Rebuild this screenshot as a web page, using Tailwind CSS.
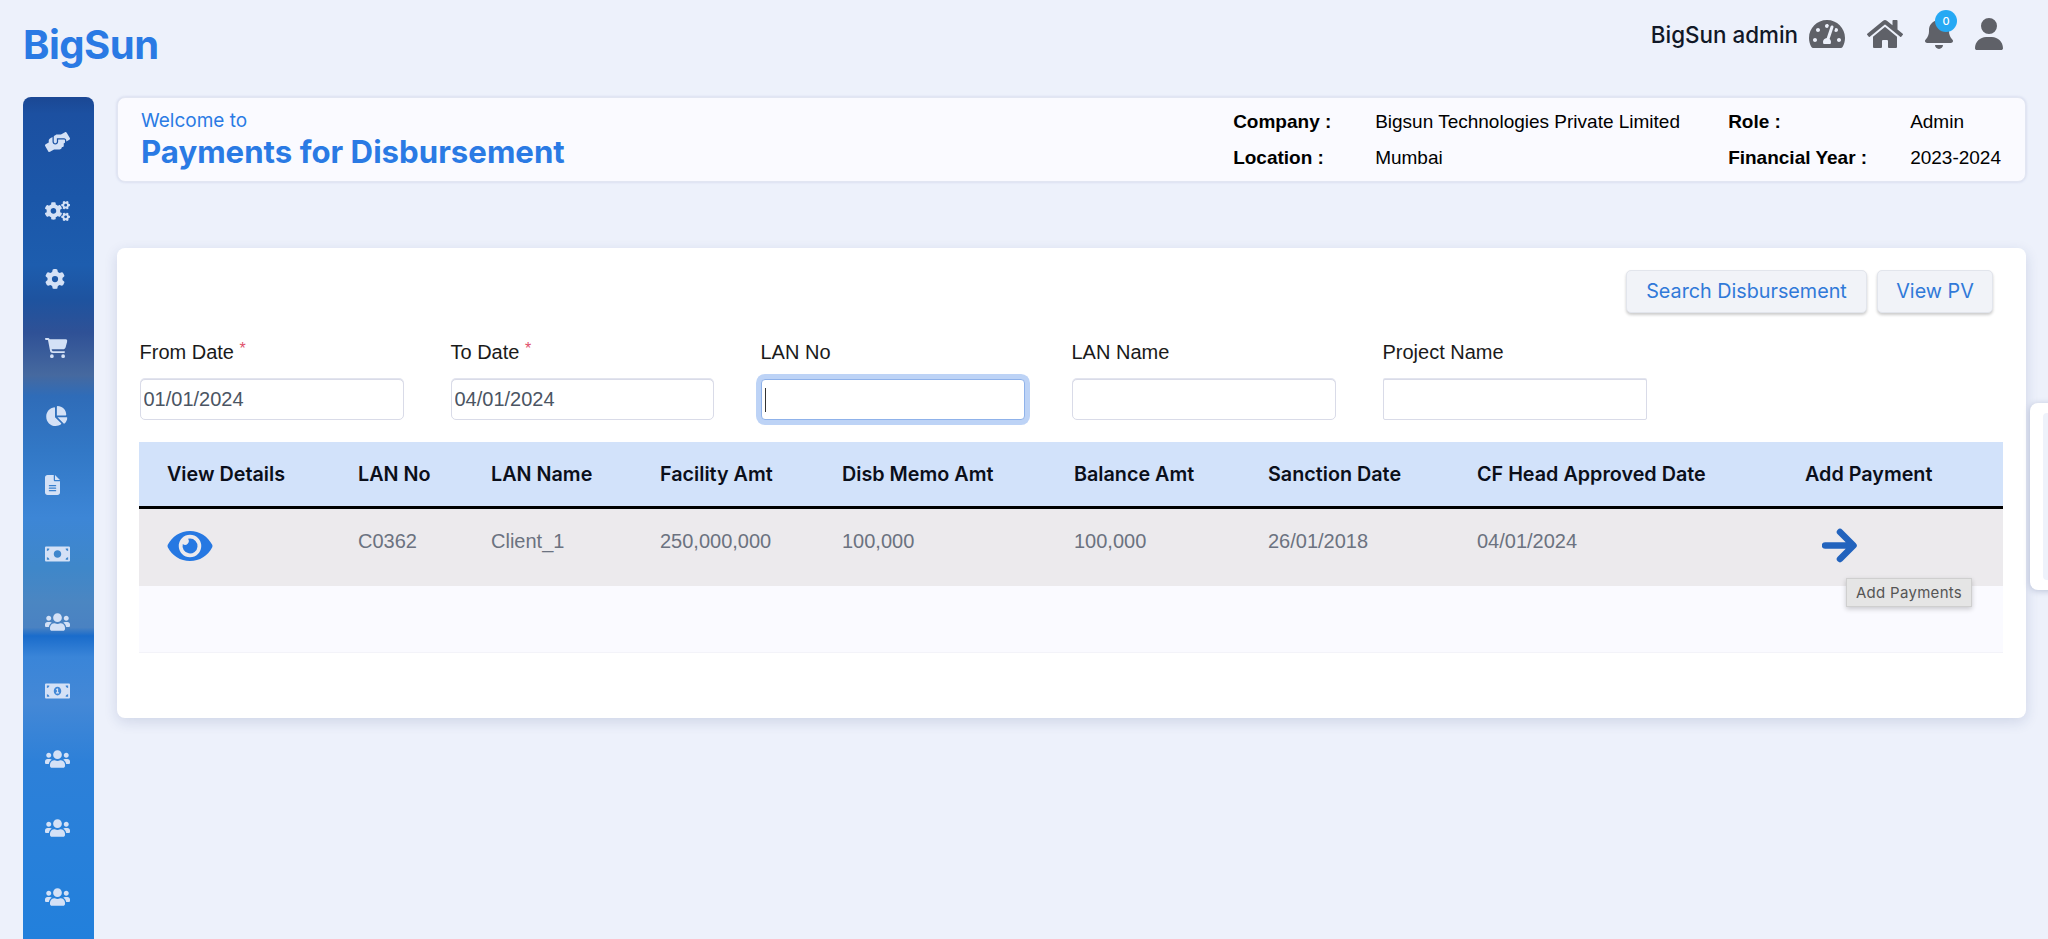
<!DOCTYPE html>
<html lang="en">
<head>
    <meta charset="UTF-8">
    <title>Payments for Disbursement</title>
    <script src="https://cdn.jsdelivr.net/npm/@tailwindcss/browser@4"></script>
</head>
<body class="bg-[#edf1fb] h-screen overflow-hidden relative font-['Liberation_Sans',sans-serif]">
    <svg class="hidden">
        <symbol id="i-help" viewBox="0 0 640 512"><path d="M488 192H336v56c0 39.7-32.3 72-72 72s-72-32.3-72-72V126.4l-64.9 39C107.8 176.9 96 197.8 96 220.2v47.3l-80 46.2C.7 322.5-4.6 342.1 4.3 357.4l80 138.6c8.8 15.3 28.4 20.5 43.7 11.7L231.4 448H368c35.3 0 64-28.7 64-64h16c17.7 0 32-14.3 32-32v-64h8c13.3 0 24-10.7 24-24v-48c0-13.3-10.7-24-24-24zm147.7-37.4L555.7 16C546.9.7 527.3-4.5 512 4.3L408.6 64H306.4c-12 0-23.7 3.4-33.9 9.7L239 94.6c-9.4 5.8-15 16.1-15 27.1V248c0 22.1 17.9 40 40 40s40-17.9 40-40v-88h184c30.9 0 56 25.1 56 56v28.5l80-46.2c15.3-8.9 20.5-28.4 11.7-43.7z"/></symbol>
        <symbol id="i-cogs" viewBox="0 0 640 512"><path d="M512.1 191l-8.2 14.3c-3 5.3-9.4 7.5-15.1 5.4-11.8-4.4-22.6-10.7-32.1-18.6-4.6-3.8-5.8-10.5-2.8-15.7l8.2-14.3c-6.9-8-12.3-17.3-15.9-27.4h-16.5c-6 0-11.2-4.3-12.2-10.3-2-12-2.1-24.6 0-37.1 1-6 6.2-10.4 12.2-10.4h16.5c3.6-10.1 9-19.4 15.9-27.4l-8.2-14.3c-3-5.2-1.9-11.9 2.8-15.7 9.5-7.9 20.4-14.2 32.1-18.6 5.7-2.1 12.1.1 15.1 5.4l8.2 14.3c10.5-1.9 21.2-1.9 31.7 0L552 6.3c3-5.3 9.4-7.5 15.1-5.4 11.8 4.4 22.6 10.7 32.1 18.6 4.6 3.8 5.8 10.5 2.8 15.7l-8.2 14.3c6.9 8 12.3 17.3 15.9 27.4h16.5c6 0 11.2 4.3 12.2 10.3 2 12 2.1 24.6 0 37.1-1 6-6.2 10.4-12.2 10.4h-16.5c-3.6 10.1-9 19.4-15.9 27.4l8.2 14.3c3 5.2 1.9 11.9-2.8 15.7-9.5 7.9-20.4 14.2-32.1 18.6-5.7 2.1-12.1-.1-15.1-5.4l-8.2-14.3c-10.4 1.9-21.2 1.9-31.7 0zm-10.5-58.8c38.5 29.6 82.4-14.3 52.8-52.8-38.5-29.7-82.4 14.3-52.8 52.8zM386.3 286.1l33.7 16.8c10.1 5.8 14.5 18.1 10.5 29.1-8.9 24.2-26.4 46.4-42.6 65.8-7.4 8.9-20.2 11.1-30.3 5.3l-29.1-16.8c-16 13.7-34.6 24.6-54.9 31.7v33.6c0 11.6-8.3 21.6-19.7 23.6-24.6 4.2-50.4 4.4-75.9 0-11.5-2-20-11.9-20-23.6V418c-20.3-7.2-38.9-18-54.9-31.7L74 403c-10 5.8-22.9 3.6-30.3-5.3-16.2-19.4-33.3-41.6-42.2-65.7-4-10.9.4-23.2 10.5-29.1l33.3-16.8c-3.9-20.9-3.9-42.4 0-63.4L12 205.8c-10.1-5.8-14.6-18.1-10.5-29 8.9-24.2 26-46.4 42.2-65.8 7.4-8.9 20.2-11.1 30.3-5.3l29.1 16.8c16-13.7 34.6-24.6 54.9-31.7V57.1c0-11.5 8.2-21.5 19.6-23.5 24.6-4.2 50.5-4.4 76-.1 11.5 2 20 11.9 20 23.6v33.6c20.3 7.2 38.9 18 54.9 31.7l29.1-16.8c10-5.8 22.9-3.6 30.3 5.3 16.2 19.4 33.2 41.6 42.1 65.8 4 10.9.1 23.2-10 29.1l-33.7 16.8c3.9 21 3.9 42.5 0 63.5zm-117.6 21.1c59.2-77-28.7-164.9-105.7-105.7-59.2 77 28.7 164.9 105.7 105.7zm243.4 182.7l-8.2 14.3c-3 5.3-9.4 7.5-15.1 5.4-11.8-4.4-22.6-10.7-32.1-18.6-4.6-3.8-5.8-10.5-2.8-15.7l8.2-14.3c-6.9-8-12.3-17.3-15.9-27.4h-16.5c-6 0-11.2-4.3-12.2-10.3-2-12-2.1-24.6 0-37.1 1-6 6.2-10.4 12.2-10.4h16.5c3.6-10.1 9-19.4 15.9-27.4l-8.2-14.3c-3-5.2-1.9-11.9 2.8-15.7 9.5-7.9 20.4-14.2 32.1-18.6 5.7-2.1 12.1.1 15.1 5.4l8.2 14.3c10.5-1.9 21.2-1.9 31.7 0l8.2-14.3c3-5.3 9.4-7.5 15.1-5.4 11.8 4.4 22.6 10.7 32.1 18.6 4.6 3.8 5.8 10.5 2.8 15.7l-8.2 14.3c6.9 8 12.3 17.3 15.9 27.4h16.5c6 0 11.2 4.3 12.2 10.3 2 12 2.1 24.6 0 37.1-1 6-6.2 10.4-12.2 10.4h-16.5c-3.6 10.1-9 19.4-15.9 27.4l8.2 14.3c3 5.2 1.9 11.9-2.8 15.7-9.5 7.9-20.4 14.2-32.1 18.6-5.7 2.1-12.1-.1-15.1-5.4l-8.2-14.3c-10.4 1.9-21.2 1.9-31.7 0zM501.6 431c38.5 29.6 82.4-14.3 52.8-52.8-38.5-29.6-82.4 14.3-52.8 52.8z"/></symbol>
        <symbol id="i-gear" viewBox="0 0 512 512"><path d="M495.9 166.6c3.2 8.7 .5 18.4-6.4 24.6l-43.3 39.4c1.1 8.3 1.7 16.8 1.7 25.4s-.6 17.1-1.7 25.4l43.3 39.4c6.9 6.2 9.6 15.9 6.4 24.6c-4.4 11.9-9.7 23.3-15.8 34.3l-4.7 8.1c-6.6 11-14 21.4-22.1 31.2c-5.9 7.2-15.7 9.6-24.5 6.8l-55.7-17.7c-13.4 10.3-28.2 18.9-44 25.4l-12.5 57.1c-2 9.1-9 16.3-18.2 17.8c-13.8 2.3-28 3.5-42.5 3.5s-28.7-1.2-42.5-3.5c-9.2-1.5-16.2-8.7-18.2-17.8l-12.5-57.1c-15.8-6.5-30.6-15.1-44-25.4L83.1 425.9c-8.8 2.8-18.6 .3-24.5-6.8c-8.1-9.8-15.5-20.2-22.1-31.2l-4.7-8.1c-6.1-11-11.4-22.4-15.8-34.3c-3.2-8.7-.5-18.4 6.4-24.6l43.3-39.4C64.6 273.1 64 264.6 64 256s.6-17.1 1.7-25.4L22.4 191.2c-6.9-6.2-9.6-15.9-6.4-24.6c4.4-11.9 9.7-23.3 15.8-34.3l4.7-8.1c6.6-11 14-21.4 22.1-31.2c5.9-7.2 15.7-9.6 24.5-6.8l55.7 17.7c13.4-10.3 28.2-18.9 44-25.4l12.5-57.1c2-9.1 9-16.3 18.2-17.8C227.3 1.2 241.5 0 256 0s28.7 1.2 42.5 3.5c9.2 1.5 16.2 8.7 18.2 17.8l12.5 57.1c15.8 6.5 30.6 15.1 44 25.4l55.7-17.7c8.8-2.8 18.6-.3 24.5 6.8c8.1 9.8 15.5 20.2 22.1 31.2l4.7 8.1c6.1 11 11.4 22.4 15.8 34.3zM256 336a80 80 0 1 0 0-160 80 80 0 1 0 0 160z"/></symbol>
        <symbol id="i-cart" viewBox="0 0 576 512"><path d="M0 24C0 10.7 10.7 0 24 0H69.5c22 0 41.5 12.8 50.6 32h411c26.3 0 45.5 25 38.6 50.4l-41 152.3c-8.5 31.4-37 53.3-69.5 53.3H170.7l5.4 28.5c2.2 11.3 12.1 19.5 23.6 19.5H488c13.3 0 24 10.7 24 24s-10.7 24-24 24H199.7c-34.6 0-64.3-24.6-70.7-58.5L77.4 54.5c-.7-3.8-4-6.5-7.9-6.5H24C10.7 48 0 37.3 0 24zM128 464a48 48 0 1 1 96 0 48 48 0 1 1 -96 0zm336-48a48 48 0 1 1 0 96 48 48 0 1 1 0-96z"/></symbol>
        <symbol id="i-pie" viewBox="0 0 576 512"><path d="M304 240V16.6c0-9 7-16.6 16-16.6C443.7 0 544 100.3 544 224c0 9-7.6 16-16.6 16H304zM32 272C32 150.7 122.1 50.3 239 34.3c9.2-1.3 17 6.1 17 15.4V288L412.5 444.5c6.7 6.7 6.2 17.7-1.5 23.1C371.8 495.6 323.8 512 272 512C139.5 512 32 404.6 32 272zm526.4 16c9.3 0 16.6 7.8 15.4 17c-7.7 55.9-34.6 105.6-73.9 142.3c-6 5.6-15.4 5.2-21.2-.7L320 288H558.4z"/></symbol>
        <symbol id="i-file" viewBox="0 0 384 512"><path d="M64 0C28.7 0 0 28.7 0 64V448c0 35.3 28.7 64 64 64H320c35.3 0 64-28.7 64-64V160H256c-17.7 0-32-14.3-32-32V0H64zM256 0V128H384L256 0zM112 256H272c8.8 0 16 7.2 16 16s-7.2 16-16 16H112c-8.8 0-16-7.2-16-16s7.2-16 16-16zm0 64H272c8.8 0 16 7.2 16 16s-7.2 16-16 16H112c-8.8 0-16-7.2-16-16s7.2-16 16-16zm0 64H272c8.8 0 16 7.2 16 16s-7.2 16-16 16H112c-8.8 0-16-7.2-16-16s7.2-16 16-16z"/></symbol>
        <symbol id="i-cash" viewBox="0 0 640 512"><path fill-rule="evenodd" d="M32 64H608c17.67 0 32 14.33 32 32V416c0 17.67-14.33 32-32 32H32c-17.67 0-32-14.33-32-32V96c0-17.67 14.33-32 32-32zM48 112v64c35.35 0 64-28.65 64-64H48zM592 176v-64h-64c0 35.35 28.65 64 64 64zM48 336v64h64c0-35.35-28.65-64-64-64zM592 400v-64c-35.35 0-64 28.65-64 64h64zM320 160c-53 0-96 43-96 96s43 96 96 96 96-43 96-96-43-96-96-96z"/></symbol>
        <symbol id="i-bill" viewBox="0 0 640 512"><path d="M352 288h-16v-88c0-4.42-3.58-8-8-8h-13.58c-4.74 0-9.37 1.4-13.31 4.03l-15.33 10.22a7.994 7.994 0 0 0-2.22 11.09l8.88 13.31a7.994 7.994 0 0 0 11.09 2.22l.47-.31V288h-16c-4.42 0-8 3.58-8 8v16c0 4.42 3.58 8 8 8h64c4.42 0 8-3.58 8-8v-16c0-4.42-3.58-8-8-8zM608 64H32C14.33 64 0 78.33 0 96v320c0 17.67 14.33 32 32 32h576c17.67 0 32-14.33 32-32V96c0-17.67-14.33-32-32-32zM48 400v-64c35.35 0 64 28.65 64 64H48zm0-224v-64h64c0 35.35-28.65 64-64 64zm272 192c-53.02 0-96-50.15-96-112 0-61.86 42.98-112 96-112s96 50.14 96 112c0 61.87-43 112-96 112zm272 32h-64c0-35.35 28.65-64 64-64v64zm0-224c-35.35 0-64-28.65-64-64h64v64z"/></symbol>
        <symbol id="i-users" viewBox="0 0 640 512"><path d="M96 224c35.3 0 64-28.7 64-64s-28.7-64-64-64-64 28.7-64 64 28.7 64 64 64zm448 0c35.3 0 64-28.7 64-64s-28.7-64-64-64-64 28.7-64 64 28.7 64 64 64zm32 32h-64c-17.6 0-33.5 7.1-45.1 18.6 40.3 22.1 68.9 62 75.1 109.4h66c17.7 0 32-14.3 32-32v-32c0-35.3-28.7-64-64-64zm-256 0c61.9 0 112-50.1 112-112S381.9 32 320 32 208 82.1 208 144s50.1 112 112 112zm76.8 32h-8.3c-20.8 10-43.9 16-68.5 16s-47.6-6-68.5-16h-8.3C179.6 288 128 339.6 128 403.2V432c0 26.5 21.5 48 48 48h288c26.5 0 48-21.5 48-48v-28.8c0-63.6-51.6-115.2-115.2-115.2zm-223.7-13.4C161.5 263.1 145.6 256 128 256H64c-35.3 0-64 28.7-64 64v32c0 17.7 14.3 32 32 32h65.9c6.3-47.4 34.9-87.3 75.2-109.4z"/></symbol>
    </svg>

    <!-- top bar -->
    <header class="h-[97px] flex justify-between pl-[23px] pr-[45px] font-[Inter,sans-serif]">
        <div class="pt-[22px] text-[40px] leading-[46px] font-bold text-[#2a7ae4] tracking-[-0.5px]">BigSun</div>
        <div class="flex items-start pt-[18px] text-[#5f6168]">
            <span class="text-[22.4px] leading-[34px] font-medium text-[#111827] mr-[11px]">BigSun admin</span>
            <svg class="w-[36px] h-[32px] fill-current mr-[22px]" viewBox="0 0 576 512"><path d="M288 32C128.94 32 0 160.94 0 320c0 52.8 14.25 102.26 39.06 144.8 5.61 9.62 16.3 15.2 27.44 15.2h443c11.14 0 21.83-5.58 27.44-15.2C561.75 422.26 576 372.8 576 320c0-159.06-128.94-288-288-288zm0 64c14.71 0 26.58 10.13 30.32 23.65-1.11 2.26-2.64 4.23-3.45 6.67l-9.22 27.67c-5.13 3.49-10.97 6.01-17.64 6.01-17.67 0-32-14.33-32-32S270.33 96 288 96zM96 384c-17.67 0-32-14.33-32-32s14.33-32 32-32 32 14.33 32 32-14.33 32-32 32zm48-160c-17.67 0-32-14.33-32-32s14.33-32 32-32 32 14.33 32 32-14.33 32-32 32zm246.77-72.41l-61.33 184C343.13 347.33 352 364.54 352 384c0 11.72-3.38 22.55-8.88 32H232.88c-5.5-9.45-8.88-20.28-8.88-32 0-33.94 26.5-61.43 59.9-63.59l61.34-184.01c4.17-12.56 17.73-19.45 30.36-15.17 12.57 4.19 19.35 17.79 15.17 30.36zm14.66 57.2l15.52-46.55c3.47-1.29 7.13-2.23 11.05-2.23 17.67 0 32 14.33 32 32s-14.33 32-32 32c-11.38-.01-20.89-6.28-26.57-15.22zM480 384c-17.67 0-32-14.33-32-32s14.33-32 32-32 32 14.33 32 32-14.33 32-32 32z"/></svg>
            <svg class="w-[36px] h-[32px] fill-current mr-[22px]" viewBox="0 0 576 512"><path d="M280.37 148.26L96 300.11V464a16 16 0 0 0 16 16l112.06-.29a16 16 0 0 0 15.92-16V368a16 16 0 0 1 16-16h64a16 16 0 0 1 16 16v95.64a16 16 0 0 0 16 16.05L464 480a16 16 0 0 0 16-16V300L295.67 148.26a12.19 12.19 0 0 0-15.3 0zM571.6 251.47L488 182.56V44.05a12 12 0 0 0-12-12h-56a12 12 0 0 0-12 12v72.61L318.47 43a48 48 0 0 0-61 0L4.34 251.47a12 12 0 0 0-1.6 16.9l25.5 31A12 12 0 0 0 45.15 301l235.22-193.74a12.19 12.19 0 0 1 15.3 0L530.9 301a12 12 0 0 0 16.9-1.6l25.5-31a12 12 0 0 0-1.7-16.93z"/></svg>
            <div class="relative w-[28px] h-[32px] mr-[22px]">
                <svg class="w-[28px] h-[32px] fill-current mt-[-1px]" viewBox="0 0 448 512"><path d="M224 0c-17.7 0-32 14.3-32 32V51.2C119 66 64 130.6 64 208v18.8c0 47-17.3 92.4-48.5 127.6l-7.4 8.3c-8.4 9.4-10.4 22.9-5.3 34.4S19.4 416 32 416H416c12.6 0 24-7.4 29.2-18.9s3.1-25-5.3-34.4l-7.4-8.3C401.3 319.2 384 273.9 384 226.8V208c0-77.4-55-142-128-156.8V32c0-17.7-14.3-32-32-32zm45.3 493.3c12-12 18.7-28.3 18.7-45.3H224 160c0 17 6.7 33.3 18.7 45.3s28.3 18.7 45.3 18.7s33.3-6.7 45.3-18.7z"/></svg>
                <span class="absolute left-[10px] top-[-8px] w-[22px] h-[22px] rounded-full bg-[#26a9f4] text-white text-[11px] leading-[22px] text-center font-medium">0</span>
            </div>
            <svg class="w-[28px] h-[32px] fill-current" viewBox="0 0 448 512"><path d="M224 256A128 128 0 1 0 224 0a128 128 0 1 0 0 256zm-45.7 48C79.8 304 0 383.8 0 482.3C0 498.7 13.3 512 29.7 512H418.3c16.4 0 29.7-13.3 29.7-29.7C448 383.8 368.2 304 269.7 304H178.3z"/></svg>
        </div>
    </header>

    <div class="flex pl-[23px] pr-[22px] gap-[23px] h-[842px]">
        <!-- sidebar -->
        <nav class="w-[71px] shrink-0 rounded-t-lg pt-[35px] pl-[22px] flex flex-col gap-[48.6px] fill-[#d4e1f6] bg-[linear-gradient(180deg,#1b4894_0%,#1c50a1_2%,#1b57a9_12%,#1d5dae_20%,#1e539f_24%,#2f5196_28%,#46699f_33%,#2f6cb8_35.5%,#3278c6_42%,#3d86d6_50%,#3f87c9_56%,#4b86c2_60%,#4a82c2_63%,#1a6ccb_64%,#3a85d8_66.5%,#4488d6_72%,#2d80d8_79%,#2280dc_100%)]">
            <svg class="w-[25px] h-5"><use href="#i-help"/></svg>
            <svg class="w-[25px] h-5"><use href="#i-cogs"/></svg>
            <svg class="w-5 h-5"><use href="#i-gear"/></svg>
            <svg class="w-[22.5px] h-5"><use href="#i-cart"/></svg>
            <svg class="w-[22.5px] h-5"><use href="#i-pie"/></svg>
            <svg class="w-[15px] h-5"><use href="#i-file"/></svg>
            <svg class="w-[25px] h-5"><use href="#i-cash"/></svg>
            <svg class="w-[25px] h-5"><use href="#i-users"/></svg>
            <svg class="w-[25px] h-5"><use href="#i-bill"/></svg>
            <svg class="w-[25px] h-5"><use href="#i-users"/></svg>
            <svg class="w-[25px] h-5"><use href="#i-users"/></svg>
            <svg class="w-[25px] h-5"><use href="#i-users"/></svg>
        </nav>

        <main class="flex-1 flex flex-col gap-[66px] min-w-0">
            <!-- title card -->
            <section class="h-[85px] bg-[#fafaff] rounded-lg border border-[#e2e6f2] shadow-[0_0_3px_rgba(60,80,150,0.18)] flex justify-between pl-[23px] pr-6">
                <div class="pt-[12px] font-[Inter,sans-serif] text-[#2a7ae4]">
                    <div class="text-[19px] leading-[22px]">Welcome to</div>
                    <div class="text-[31.2px] leading-[40px] font-bold">Payments for Disbursement</div>
                </div>
                <div class="grid grid-cols-[142px_353px_182px_auto] grid-rows-[36px_36px] pt-[6px] text-[19px] items-center text-black">
                    <div class="font-bold">Company :</div><div>Bigsun Technologies Private Limited</div>
                    <div class="font-bold">Role :</div><div>Admin</div>
                    <div class="font-bold">Location :</div><div>Mumbai</div>
                    <div class="font-bold">Financial Year :</div><div>2023-2024</div>
                </div>
            </section>

            <!-- search card -->
            <section class="h-[470px] bg-white rounded-lg shadow-[0_4px_14px_rgba(30,50,110,0.14)] pt-[22px] px-[22px]">
                <div class="flex justify-end gap-[10px] pr-[11px] font-[Inter,sans-serif] text-[19.75px] text-[#3079d8]">
                    <button class="h-[43px] pt-px w-[241px] bg-[#f1f3f8] rounded-[5px] border border-[#e2e5ec] shadow-[0_2px_3px_rgba(0,0,0,0.2)]">Search Disbursement</button>
                    <button class="h-[43px] pt-px w-[116px] bg-[#f1f3f8] rounded-[5px] border border-[#e2e5ec] shadow-[0_2px_3px_rgba(0,0,0,0.2)]">View PV</button>
                </div>

                <div class="flex gap-[47px] mt-[27px] ml-[0.5px] text-[20px] text-[#1a1a1a]">
                    <label class="w-[264px] block">
                        <div class="h-6 leading-6 mb-[15px]">From Date <span class="text-[#e0506a] align-[5px] text-[16px] leading-[0]">*</span></div>
                        <input type="text" value="01/01/2024" class="w-full h-[41px] px-[3px] bg-white border border-[#d9dbe8] rounded-[5px] text-[20px] text-[#4b5563] shadow-[0_-1px_0_#e2e4ee]">
                    </label>
                    <label class="w-[263px] block">
                        <div class="h-6 leading-6 mb-[15px]">To Date <span class="text-[#e0506a] align-[5px] text-[16px] leading-[0]">*</span></div>
                        <input type="text" value="04/01/2024" class="w-full h-[41px] px-[3px] bg-white border border-[#d9dbe8] rounded-[5px] text-[20px] text-[#4b5563] shadow-[0_-1px_0_#e2e4ee]">
                    </label>
                    <label class="w-[264px] block relative">
                        <div class="h-6 leading-6 mb-[15px]">LAN No</div>
                        <input type="text" class="w-full h-[41px] px-1 bg-white border border-[#8fb2ea] rounded-[4px] ring-[5px] ring-[#bdd3f6]">
                        <span class="absolute left-[4px] top-[48px] w-px h-[24px] bg-[#333]"></span>
                    </label>
                    <label class="w-[264px] block">
                        <div class="h-6 leading-6 mb-[15px]">LAN Name</div>
                        <input type="text" class="w-full h-[41px] px-1 bg-white border border-[#d9dbe8] rounded-[5px] shadow-[0_-1px_0_#e2e4ee]">
                    </label>
                    <label class="w-[264px] block">
                        <div class="h-6 leading-6 mb-[15px]">Project Name</div>
                        <input type="text" class="w-full h-[41px] px-1 bg-white border border-[#d9dbe8] rounded-[2px] shadow-[0_-1px_0_#e2e4ee]">
                    </label>
                </div>

                <table class="w-[1864px] table-fixed mt-[22px]">
                    <colgroup>
                        <col class="w-[191px]"><col class="w-[133px]"><col class="w-[169px]"><col class="w-[182px]"><col class="w-[232px]"><col class="w-[194px]"><col class="w-[209px]"><col class="w-[328px]"><col class="w-[226px]">
                    </colgroup>
                    <thead class="bg-[#d2e2fa] font-[Inter,sans-serif] text-[19.75px] text-[#0b0f1a]">
                        <tr class="h-[65px] border-b-[3px] border-black text-left">
                            <th class="pl-7 pt-[2px] font-semibold">View Details</th>
                            <th class="pl-7 pt-[2px] font-semibold">LAN No</th>
                            <th class="pl-7 pt-[2px] font-semibold">LAN Name</th>
                            <th class="pl-7 pt-[2px] font-semibold">Facility Amt</th>
                            <th class="pl-7 pt-[2px] font-semibold">Disb Memo Amt</th>
                            <th class="pl-7 pt-[2px] font-semibold">Balance Amt</th>
                            <th class="pl-7 pt-[2px] font-semibold">Sanction Date</th>
                            <th class="pl-7 pt-[2px] font-semibold">CF Head Approved Date</th>
                            <th class="pl-7 pt-[2px] font-semibold">Add Payment</th>
                        </tr>
                    </thead>
                    <tbody class="text-[20px] text-[#6b7280]">
                        <tr class="h-[79px] bg-[#eceaed] align-top">
                            <td class="pl-7 pt-[22px]"><svg class="w-[46px] h-[30px] fill-[#2678e2]" viewBox="0 64 576 384"><path d="M572.52 241.4C518.29 135.59 410.93 64 288 64S57.68 135.64 3.48 241.41a32.35 32.35 0 0 0 0 29.19C57.71 376.41 165.07 448 288 448s230.32-71.64 284.52-177.41a32.35 32.35 0 0 0 0-29.19zM288 400a144 144 0 1 1 144-144 143.93 143.93 0 0 1-144 144zm0-240a95.31 95.31 0 0 0-25.31 3.79 47.85 47.85 0 0 1-66.9 66.9A95.78 95.78 0 1 0 288 160z"/></svg></td>
                            <td class="pl-7 pt-[17px]">C0362</td>
                            <td class="pl-7 pt-[17px]">Client_1</td>
                            <td class="pl-7 pt-[17px]">250,000,000</td>
                            <td class="pl-7 pt-[17px]">100,000</td>
                            <td class="pl-7 pt-[17px]">100,000</td>
                            <td class="pl-7 pt-[17px]">26/01/2018</td>
                            <td class="pl-7 pt-[17px]">04/01/2024</td>
                            <td class="pl-[45px] pt-[19px] relative">
                                <svg class="w-[35px] h-[35px] stroke-[#2263bd] fill-none" viewBox="0 0 35 35" stroke-width="6.5" stroke-linecap="round" stroke-linejoin="round"><path d="M3 17.5H31M18 4l13.5 13.5L18 31"/></svg>
                                <div class="absolute left-[69px] top-[69px] w-[126px] h-[29px] z-10 bg-[#e5e5e5] border border-[#cfcfcf] shadow-[0_2px_5px_rgba(0,0,0,0.2)] font-[Inter,sans-serif] text-[15px] leading-[27px] tracking-[0.3px] text-[#555] text-center">Add Payments</div>
                            </td>
                        </tr>
                        <tr class="h-[66px] bg-[#fafaff] border-b border-[#f3f3f9]"><td colspan="9"></td></tr>
                    </tbody>
                </table>
            </section>
        </main>
    </div>

    <!-- panel cut off by the right edge of the window -->
    <div class="absolute left-[2030px] top-[403px] w-[40px] h-[187px] bg-white rounded-l-lg shadow-[0_1px_6px_rgba(30,50,110,0.25)] py-[10px] pl-[13px]">
        <div class="h-full bg-[#eef2fb] rounded-l"></div>
    </div>
</body>
</html>
